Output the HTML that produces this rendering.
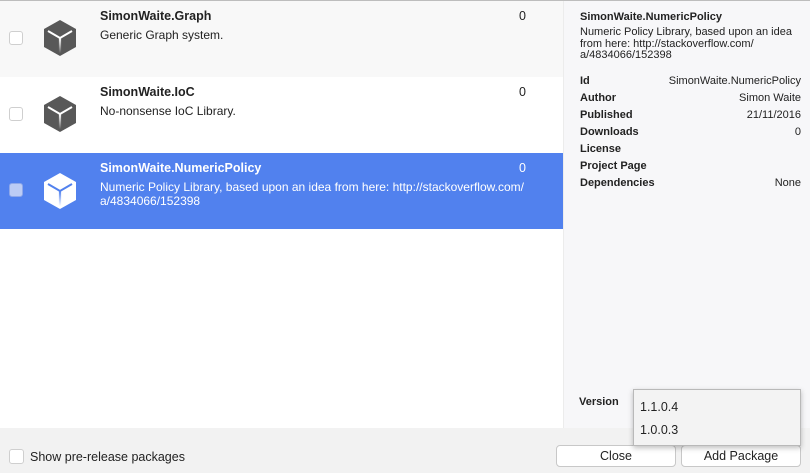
<!DOCTYPE html>
<html><head><meta charset="utf-8"><style>
*{margin:0;padding:0;box-sizing:border-box}
body{width:810px;height:473px;overflow:hidden;background:#fff;font-family:"Liberation Sans",sans-serif;font-size:12px;color:#222;position:relative}
.top{position:absolute;left:0;top:0;width:810px;height:1px;background:#bdbdbd}
.row{position:absolute;left:0;width:563px;height:76px}
.cb{position:absolute;left:9px;width:14px;height:14px;border:1px solid #cfcfcf;border-radius:3px;background:#fff}
.ico{position:absolute;left:43px;width:34px;height:38px}
.t{position:absolute;left:100px;font-weight:bold;font-size:12.5px}
.d{position:absolute;left:100px;font-size:12px;line-height:14px;width:440px}
.n{position:absolute;left:519px;font-size:12.5px}
.side{position:absolute;left:563px;top:1px;width:247px;height:427px;background:#f7f7f9;border-left:1px solid #ececec}
.side .h{position:absolute;left:16px;top:10px;font-weight:bold;font-size:11px}
.side .p{position:absolute;left:16px;top:26px;font-size:11px;line-height:11.5px;width:220px}
.kv{position:absolute;left:16px;width:221px;font-size:11px}
.kv b{float:left}
.kv span{float:right}
.bot{position:absolute;left:0;top:428px;width:810px;height:45px;background:#f2f2f2}
.btn{position:absolute;top:445px;height:22px;background:#fff;border:1px solid #c8c8c8;border-radius:4px;text-align:center;line-height:20px;font-size:12.5px}
.dd{position:absolute;left:633px;top:389px;width:168px;height:57px;background:#f3f3f3;border:1px solid #b9b9b9;box-shadow:0 2px 5px rgba(0,0,0,.25);font-size:12.5px}
</style></head><body>
<div class="top"></div>
<svg width="0" height="0" style="position:absolute"><defs>
<linearGradient id="g1" gradientUnits="userSpaceOnUse" x1="0" y1="19" x2="0" y2="34"><stop offset="0" stop-color="#fff"/><stop offset="1" stop-color="#5a5a5a"/></linearGradient>
<linearGradient id="g2" gradientUnits="userSpaceOnUse" x1="0" y1="19" x2="0" y2="34"><stop offset="0" stop-color="#5181ee"/><stop offset="1" stop-color="#fff"/></linearGradient>
</defs></svg>

<div class="row" style="top:1px;background:#f8f8f8">
<div class="cb" style="top:30px"></div>
<svg class="ico" style="top:18px" viewBox="0 0 34 38"><polygon points="17,1 33,10 33,28 17,37 1,28 1,10" fill="#585858"/><path d="M5,12 L17,19 L29,12" stroke="#fff" stroke-width="2" fill="none"/><path d="M17,19 L17,34" stroke="url(#g1)" stroke-width="2.2"/></svg>
<div class="t" style="top:8px">SimonWaite.Graph</div>
<div class="d" style="top:27px">Generic Graph system.</div>
<div class="n" style="top:8px">0</div>
</div>

<div class="row" style="top:77px;background:#fff">
<div class="cb" style="top:30px"></div>
<svg class="ico" style="top:18px" viewBox="0 0 34 38"><polygon points="17,1 33,10 33,28 17,37 1,28 1,10" fill="#585858"/><path d="M5,12 L17,19 L29,12" stroke="#fff" stroke-width="2" fill="none"/><path d="M17,19 L17,34" stroke="url(#g1)" stroke-width="2.2"/></svg>
<div class="t" style="top:8px">SimonWaite.IoC</div>
<div class="d" style="top:27px">No-nonsense IoC Library.</div>
<div class="n" style="top:8px">0</div>
</div>

<div class="row" style="top:153px;background:#5181ee;color:#fff">
<div class="cb" style="top:30px;background:#bcccf5;border-color:#8fa8ea"></div>
<svg class="ico" style="top:19px" viewBox="0 0 34 38"><polygon points="17,1 33,10 33,28 17,37 1,28 1,10" fill="#fff"/><path d="M5,12 L17,19 L29,12" stroke="#5181ee" stroke-width="2" fill="none"/><path d="M17,19 L17,34" stroke="url(#g2)" stroke-width="2.2"/></svg>
<div class="t" style="top:8px">SimonWaite.NumericPolicy</div>
<div class="d" style="top:27px">Numeric Policy Library, based upon an idea from here: http://stackoverflow.com/<br>a/4834066/152398</div>
<div class="n" style="top:8px">0</div>
</div>

<div class="side">
<div class="h">SimonWaite.NumericPolicy</div>
<div class="p">Numeric Policy Library, based upon an idea from here: http://stackoverflow.com/<br>a/4834066/152398</div>
<div class="kv" style="top:74px"><b>Id</b><span>SimonWaite.NumericPolicy</span></div>
<div class="kv" style="top:91px"><b>Author</b><span>Simon Waite</span></div>
<div class="kv" style="top:108px"><b>Published</b><span>21/11/2016</span></div>
<div class="kv" style="top:125px"><b>Downloads</b><span>0</span></div>
<div class="kv" style="top:142px"><b>License</b></div>
<div class="kv" style="top:159px"><b>Project Page</b></div>
<div class="kv" style="top:176px"><b>Dependencies</b><span>None</span></div>
<div class="kv" style="top:395px;left:15px"><b>Version</b></div>
</div>

<div class="bot">
<div class="cb" style="top:21px;left:9px;width:15px;height:15px"></div>
<div style="position:absolute;left:30px;top:22px;font-size:12.5px">Show pre-release packages</div>
</div>
<div class="btn" style="left:556px;width:120px">Close</div>
<div class="btn" style="left:681px;width:120px">Add Package</div>

<div class="dd">
<div style="position:absolute;left:6px;top:10px">1.1.0.4</div>
<div style="position:absolute;left:6px;top:33px">1.0.0.3</div>
</div>
</body></html>
